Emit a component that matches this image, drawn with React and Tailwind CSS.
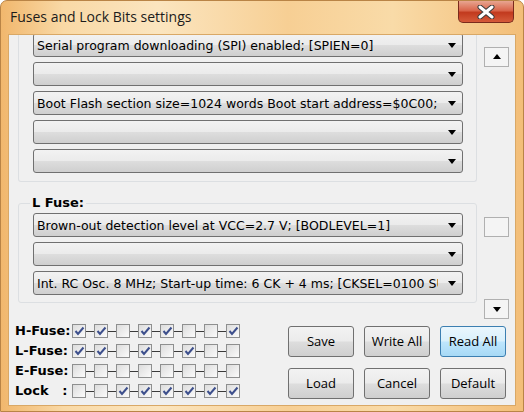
import React from 'react';

const UI = { fontFamily: '"DejaVu Sans", Verdana, sans-serif' };
const TITLE = { fontFamily: '"Open Sans", "Noto Sans", sans-serif' };
const BTN = { fontFamily: '"Open Sans", "Noto Sans", sans-serif' };

const Arrow = ({ size = 8 }) => (
    <svg width={size} height={size / 2 + 1} viewBox="0 0 8 5" className="shrink-0">
        <path d="M0 0 L8 0 L4 5 Z" fill="#000" />
    </svg>
);

const Combo = ({ text }) => (
    <div className="h-[24px] shrink-0 rounded-[3px] border border-[#707070] bg-[linear-gradient(to_bottom,#f2f2f2_0%,#ebebeb_48%,#dddddd_52%,#cfcfcf_100%)] flex items-center pl-[3px] pr-[6px]">
        <span className="flex-1 overflow-hidden whitespace-nowrap text-[12.5px] leading-[15px] text-black mr-[10px]" style={UI}>{text}</span>
        <Arrow />
    </div>
);

const Check = ({ on }) => (
    <div className="w-[14px] h-[14px] shrink-0 border border-[#8e8f8f] bg-[linear-gradient(135deg,#dcdcdc,#fbfbfb)] flex items-center justify-center">
        {on ? (
            <svg width="11" height="10" viewBox="0 0 11 10">
                <path d="M1.5 5 L4 8 L9.5 1.5" fill="none" stroke="#3d4f8c" strokeWidth="2" />
            </svg>
        ) : null}
    </div>
);

const BitRow = ({ label, bits }) => (
    <div className="flex items-center h-[14px]">
        <div className="w-[57px] text-[13px] font-bold text-black whitespace-pre" style={UI}>{label}</div>
        {bits.map((b, i) => (
            <React.Fragment key={i}>
                {i > 0 && <div className="w-[8px] h-px bg-[#3a3a3a]" />}
                <Check on={b === 1} />
            </React.Fragment>
        ))}
    </div>
);

const Button = ({ children, active }) => (
    <div
        className={`w-[66px] h-[31px] rounded-[3px] border flex items-center justify-center text-[13px] text-black ${
            active
                ? 'border-[#3c7fb1] bg-[linear-gradient(to_bottom,#eaf6fd_0%,#d9f0fc_48%,#bee6fd_52%,#a7d9f5_100%)]'
                : 'border-[#707070] bg-[linear-gradient(to_bottom,#f2f2f2_0%,#ebebeb_48%,#dddddd_52%,#cfcfcf_100%)]'
        }`}
        style={BTN}
    >
        {children}
    </div>
);

const ScrollBox = ({ children, className = '' }) => (
    <div className={`w-[25px] border border-[#b0b0b0] bg-[#f4f4f4] flex items-center justify-center ${className}`}>{children}</div>
);

export default function App() {
    const hFuse = [
        'Serial program downloading (SPI) enabled; [SPIEN=0]',
        '',
        'Boot Flash section size=1024 words Boot start address=$0C00; [BOOTSZ=00]',
        '',
        '',
    ];
    const lFuse = [
        'Brown-out detection level at VCC=2.7 V; [BODLEVEL=1]',
        '',
        'Int. RC Osc. 8 MHz; Start-up time: 6 CK + 4 ms; [CKSEL=0100 SUT=10]',
    ];

    return (
        <div className="w-[524px] h-[412px] flex flex-col rounded-t-[7px] border border-[#b98446] bg-[linear-gradient(to_right,#f1b76d_0%,#f9d9a6_12%,#fbe5bf_30%,#f7cf94_55%,#f9dba8_75%,#f3be78_100%)] overflow-hidden">
            {/* title bar */}
            <div className="h-[33px] flex items-start shrink-0">
                <div className="pl-[9px] pt-[5px] text-[14px] text-[#1b1b1b]" style={TITLE}>Fuses and Lock Bits settings</div>
                <div className="ml-auto mr-[9px] w-[56px] h-[22px] rounded-b-[5px] border border-t-0 border-[#7a2a1c] bg-[linear-gradient(to_bottom,#e8a590_0%,#d9664c_45%,#c23a1e_55%,#d55a3a_100%)] flex items-center justify-center">
                    <svg width="18" height="14" viewBox="0 0 18 14">
                        <path d="M3 2 L15 12 M15 2 L3 12" stroke="#3b3b3b" strokeWidth="5" strokeLinecap="round" />
                        <path d="M3 2 L15 12 M15 2 L3 12" stroke="#ffffff" strokeWidth="3" strokeLinecap="round" />
                    </svg>
                </div>
            </div>

            {/* client */}
            <div className="mx-[7px] h-[372px] shrink-0 bg-[#f0f0f0] border border-[#d9a866] flex flex-col">
                <div className="h-[284px] flex shrink-0">
                    <div className="w-[470px] h-full overflow-hidden">
                        {/* H fuse group (scrolled) */}
                        <div className="ml-[9px] w-[459px] -mt-[2px] border-x border-b border-[#dcdfe2] rounded-b-[3px] pl-[14px] pr-[13px] pb-[8px] flex flex-col gap-[5px]">
                            {hFuse.map((t, i) => <Combo key={i} text={t} />)}
                        </div>
                        {/* L fuse group */}
                        <div className="relative ml-[9px] w-[459px] mt-[21px] border border-[#dcdfe2] rounded-[3px] pl-[14px] pr-[13px] pt-[9px] pb-[7px] flex flex-col gap-[5px]">
                            <span className="absolute -top-[9px] left-[11px] px-[2px] bg-[#f0f0f0] text-[13px] leading-[16px] font-bold text-black" style={UI}>L Fuse:</span>
                            {lFuse.map((t, i) => <Combo key={i} text={t} />)}
                        </div>
                    </div>
                    <div className="ml-[5px] flex flex-col">
                        <ScrollBox className="mt-[12px] h-[20px]">
                            <svg width="8" height="5" viewBox="0 0 8 5"><path d="M0 5 L8 5 L4 0 Z" fill="#000" /></svg>
                        </ScrollBox>
                        <ScrollBox className="mt-[150px] h-[21px]" />
                        <ScrollBox className="mt-[62px] h-[20px]"><Arrow /></ScrollBox>
                    </div>
                </div>

                {/* bottom section */}
                <div className="flex">
                    <div className="ml-[6px] mt-[5px] flex flex-col gap-[6px]">
                        <BitRow label="H-Fuse:" bits={[1, 1, 0, 1, 1, 0, 0, 1]} />
                        <BitRow label="L-Fuse:" bits={[1, 1, 0, 1, 0, 1, 0, 0]} />
                        <BitRow label="E-Fuse:" bits={[0, 0, 0, 0, 0, 0, 0, 0]} />
                        <BitRow label={'Lock   :'} bits={[0, 0, 1, 1, 1, 1, 1, 1]} />
                    </div>
                    <div className="ml-auto mr-[9px] mt-[7px] grid grid-cols-3 gap-x-[10px] gap-y-[11px]">
                        <Button>Save</Button>
                        <Button>Write All</Button>
                        <Button active>Read All</Button>
                        <Button>Load</Button>
                        <Button>Cancel</Button>
                        <Button>Default</Button>
                    </div>
                </div>
            </div>
        </div>
    );
}
